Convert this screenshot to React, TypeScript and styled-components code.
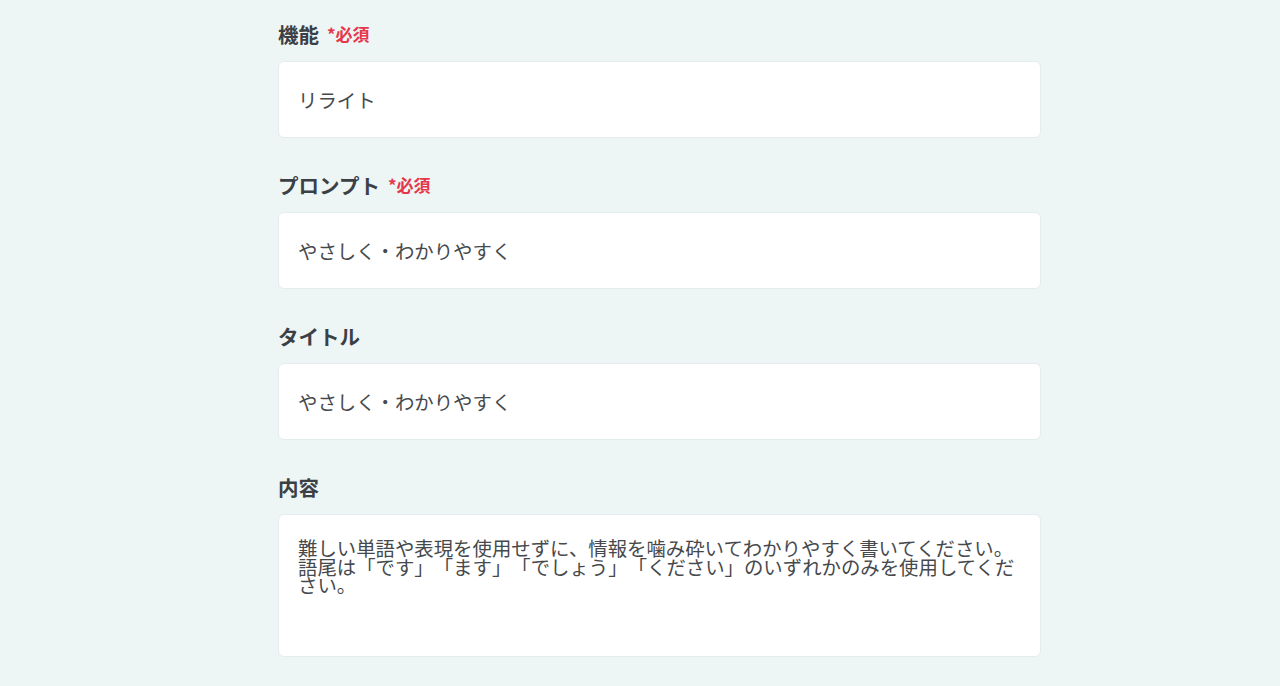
import styled, { createGlobalStyle } from "styled-components";

const GlobalStyle = createGlobalStyle`
  html, body {
    margin: 0;
    padding: 0;
    background: #eef5f5;
  }
  body {
    font-family: "Noto Sans CJK JP", "Noto Sans", sans-serif;
    color: #3b4045;
    text-spacing-trim: space-all;
  }
`;

const fields = [
  { label: "機能", required: true, value: "リライト", multi: false },
  { label: "プロンプト", required: true, value: "やさしく・わかりやすく", multi: false },
  { label: "タイトル", required: false, value: "やさしく・わかりやすく", multi: false },
  {
    label: "内容",
    required: false,
    value:
      "難しい単語や表現を使用せずに、情報を噛み砕いてわかりやすく書いてください。\n語尾は「です」「ます」「でしょう」「ください」のいずれかのみを使用してください。",
    multi: true,
  },
];

export default function App() {
  return (
    <>
      <GlobalStyle />
      <Page>
        <Form>
          {fields.map((f) => (
            <Group key={f.label}>
              <Label>
                {f.label}
                {f.required && <Required>*必須</Required>}
              </Label>
              <Box multi={f.multi}>
                <Value multi={f.multi}>{f.value}</Value>
              </Box>
            </Group>
          ))}
        </Form>
      </Page>
    </>
  );
}

const Page = styled.div`
  min-height: 686px;
  padding: 22px 0 0 278px;
  box-sizing: border-box;
`;

const Form = styled.div`
  width: 763px;
  display: flex;
  flex-direction: column;
  gap: 35px;
`;

const Group = styled.div`
  display: flex;
  flex-direction: column;
  gap: 15px;
`;

const Label = styled.div`
  height: 24px;
  line-height: 24px;
  display: flex;
  align-items: center;
  font-size: 20.5px;
  font-weight: 700;
  color: #3b4045;
  white-space: nowrap;
`;

const Required = styled.span`
  margin-left: 8px;
  font-size: 17px;
  font-weight: 700;
  color: #e5384a;
`;

const Box = styled.div<{ multi: boolean }>`
  box-sizing: border-box;
  height: ${(p) => (p.multi ? "143px" : "77px")};
  background: #ffffff;
  border: 1px solid #e4ecee;
  border-radius: 6px;
  display: flex;
  align-items: ${(p) => (p.multi ? "flex-start" : "center")};
  padding: ${(p) => (p.multi ? "24px 20px 20px 19px" : "0 19px")};
`;

const Value = styled.div<{ multi: boolean }>`
  font-size: 19.4px;
  line-height: ${(p) => (p.multi ? "18.5px" : "24px")};
  color: #46494c;
  white-space: pre-wrap;
  word-break: break-all;
  text-spacing-trim: space-all;
`;
